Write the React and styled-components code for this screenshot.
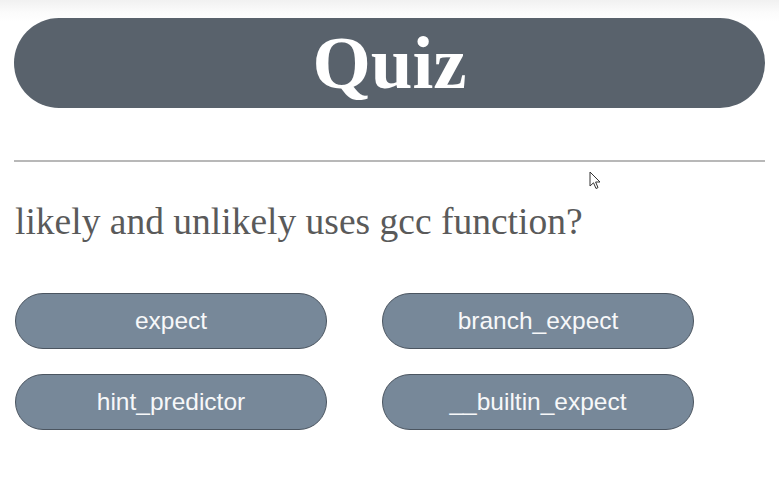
import React from 'react';
import styled, { createGlobalStyle } from 'styled-components';

const GlobalStyle = createGlobalStyle`
  html, body {
    margin: 0;
    padding: 0;
  }
  body {
    min-height: 484px;
    background: linear-gradient(#f1f1f1 0, #fbfbfb 12px, #ffffff 22px) #ffffff;
    background-repeat: no-repeat;
  }
`;

const Page = styled.div`
  position: relative;
  padding: 18px 14px 0 14px;
`;

const Header = styled.h1`
  margin: 0;
  height: 90px;
  border-radius: 45px;
  background: #59626c;
  color: #ffffff;
  font-family: 'Liberation Serif', 'Times New Roman', serif;
  font-weight: 700;
  font-size: 75px;
  line-height: 90px;
  text-align: center;
`;

const Divider = styled.hr`
  margin: 52px 0 0 0;
  border: none;
  height: 2px;
  background: #b8b8b8;
`;

const Question = styled.p`
  margin: 39px 0 0 1px;
  font-family: 'Liberation Serif', 'Times New Roman', serif;
  font-size: 37.5px;
  line-height: 41px;
  color: #5a5a5a;
`;

const Answers = styled.div`
  display: grid;
  grid-template-columns: 312px 312px;
  column-gap: 55px;
  row-gap: 25px;
  margin: 51px 0 0 1px;
`;

const Answer = styled.button`
  height: 56px;
  padding: 0;
  border: 1px solid #4b5560;
  border-radius: 28px;
  background: #778899;
  color: #f7f8f9;
  font-family: 'Liberation Sans', Arial, sans-serif;
  font-size: 24.5px;
  cursor: pointer;
`;

const Cursor = styled.svg`
  position: absolute;
  left: 589px;
  top: 171px;
  width: 12px;
  height: 19px;
  pointer-events: none;
`;

const answers = ['expect', 'branch_expect', 'hint_predictor', '__builtin_expect'];

export default function App() {
  return (
    <>
      <GlobalStyle />
      <Page>
        <Header>Quiz</Header>
        <Divider />
        <Question>likely and unlikely uses gcc function?</Question>
        <Answers>
          {answers.map(a => (
            <Answer key={a} type="button">
              {a}
            </Answer>
          ))}
        </Answers>
        <Cursor viewBox="0 0 12 19">
          <path
            d="M1 1 L1 15 L4.5 11.8 L7 17.5 L9 16.6 L6.6 11 L11 11 Z"
            fill="#ffffff"
            stroke="#333333"
            strokeWidth="1"
            strokeLinejoin="round"
          />
        </Cursor>
      </Page>
    </>
  );
}
